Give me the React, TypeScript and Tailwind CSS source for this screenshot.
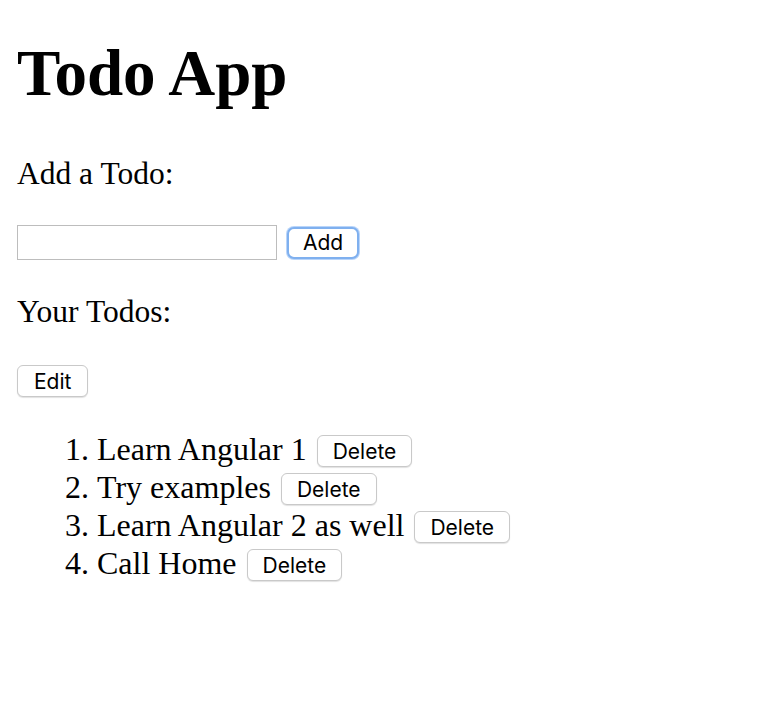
import { useState } from 'react';

const initialTodos = ['Learn Angular 1', 'Try examples', 'Learn Angular 2 as well', 'Call Home'];

const btn =
  "h-[32px] px-[15px] bg-white border border-[#c9c9c9] rounded-[6px] shadow-[0_1px_1px_rgba(0,0,0,0.12)] text-[21px] leading-none text-black font-['Inter','Liberation_Sans',sans-serif]";

export default function App() {
  const [todos, setTodos] = useState<string[]>(initialTodos);
  const [draft, setDraft] = useState('');

  const addTodo = () => {
    if (!draft.trim()) return;
    setTodos([...todos, draft.trim()]);
    setDraft('');
  };

  return (
    <div className="min-h-[710px] bg-white pl-[17px] flex flex-col items-start text-black font-['Liberation_Serif','Times_New_Roman',serif]">
      <h1 className="mt-[38px] h-[71px] text-[65px] leading-[71px] font-bold">Todo App</h1>

      <p className="mt-[47px] text-[31.5px] leading-[36px]">Add a Todo:</p>

      {/* Add row */}
      <div className="mt-[33px] h-[35px] flex items-center">
        <input
          value={draft}
          onChange={(e) => setDraft(e.target.value)}
          className="w-[260px] h-[35px] border border-[#bdbdbd] bg-white px-1 text-[20px] outline-none"
        />
        <button
          onClick={addTodo}
          className="ml-[10px] h-[32px] w-[72px] bg-white border-2 border-[#7fb0ef] rounded-[7px] shadow-[0_0_0_1px_#b9d5fa] text-[21px] leading-none text-black font-['Inter','Liberation_Sans',sans-serif]"
        >
          Add
        </button>
      </div>

      <p className="mt-[34px] text-[31.5px] leading-[36px]">Your Todos:</p>

      <button className={`mt-[35px] px-[16px] ${btn}`}>Edit</button>

      {/* List */}
      <ol className="mt-[33px] ml-[48px] flex flex-col">
        {todos.map((todo, i) => (
          <li key={i} className="h-[38px] flex items-center text-[32px] leading-[38px] whitespace-nowrap">
            <span className="w-[32px]">{i + 1}.</span>
            <span>{todo}</span>
            <button
              onClick={() => setTodos(todos.filter((_, j) => j !== i))}
              className={`ml-[10px] mt-[4px] ${btn}`}
            >
              Delete
            </button>
          </li>
        ))}
      </ol>
    </div>
  );
}
